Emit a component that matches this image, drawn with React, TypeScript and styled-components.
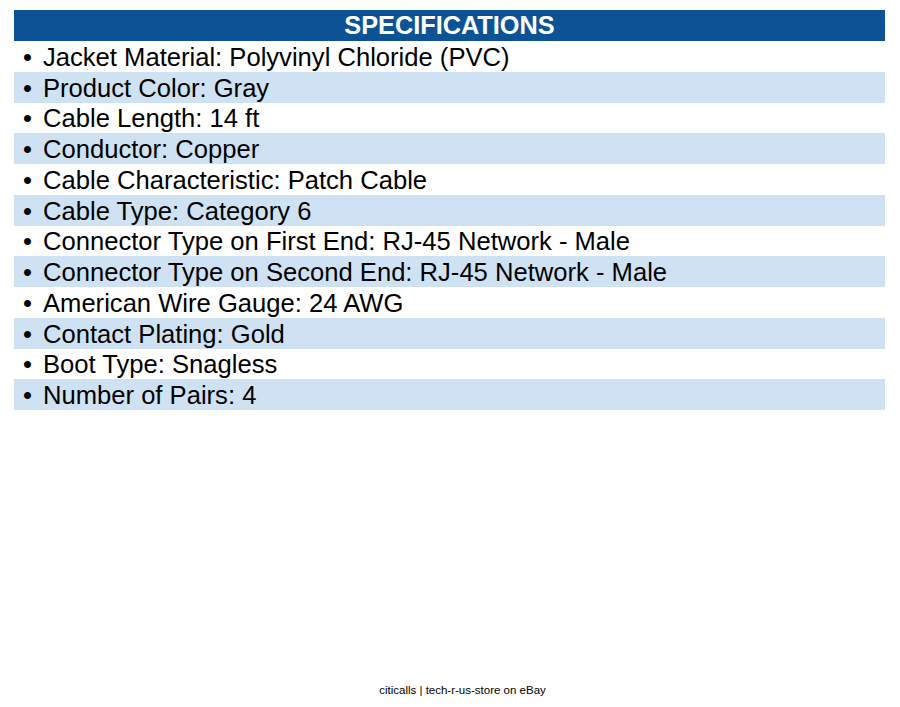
import React from "react";
import styled, { createGlobalStyle } from "styled-components";

const Global = createGlobalStyle`
  html, body { margin: 0; padding: 0; background: #ffffff; }
  body { font-family: "Liberation Sans", Arial, sans-serif; }
`;

const Page = styled.div`
  width: 900px;
  height: 707px;
  display: flex;
  flex-direction: column;
  box-sizing: border-box;
  padding: 10px 15px 0 14px;
`;

const Table = styled.div`
  display: flex;
  flex-direction: column;
`;

const Header = styled.div`
  height: 31px;
  background: #0b5394;
  color: #ffffff;
  font-weight: bold;
  font-size: 25.3px;
  line-height: 31px;
  text-align: center;
`;

const Row = styled.div<{ $shaded: boolean }>`
  height: 30.75px;
  box-sizing: border-box;
  padding-top: 2px;
  display: flex;
  align-items: center;
  background: ${(p) => (p.$shaded ? "#cfe2f3" : "#ffffff")};
  color: #000000;
  font-size: 25.6px;
  white-space: nowrap;
`;

const Bullet = styled.span`
  width: 29px;
  padding-left: 9px;
  box-sizing: border-box;
  text-align: left;
`;

const Spacer = styled.div`
  flex: 1;
`;

const Footer = styled.div`
  height: 24px;
  display: flex;
  justify-content: center;
  padding-left: 26px;
  font-size: 11.5px;
  color: #000000;
  line-height: 14px;
`;

const specs = [
  "Jacket Material: Polyvinyl Chloride (PVC)",
  "Product Color: Gray",
  "Cable Length: 14 ft",
  "Conductor: Copper",
  "Cable Characteristic: Patch Cable",
  "Cable Type: Category 6",
  "Connector Type on First End: RJ-45 Network - Male",
  "Connector Type on Second End: RJ-45 Network - Male",
  "American Wire Gauge: 24 AWG",
  "Contact Plating: Gold",
  "Boot Type: Snagless",
  "Number of Pairs: 4",
];

export default function App() {
  return (
    <>
      <Global />
      <Page>
        <Table>
          <Header>SPECIFICATIONS</Header>
          {specs.map((s, i) => (
            <Row key={s} $shaded={i % 2 === 1}>
              <Bullet>•</Bullet>
              <span>{s}</span>
            </Row>
          ))}
        </Table>
        <Spacer />
        <Footer>citicalls | tech-r-us-store on eBay</Footer>
      </Page>
    </>
  );
}
